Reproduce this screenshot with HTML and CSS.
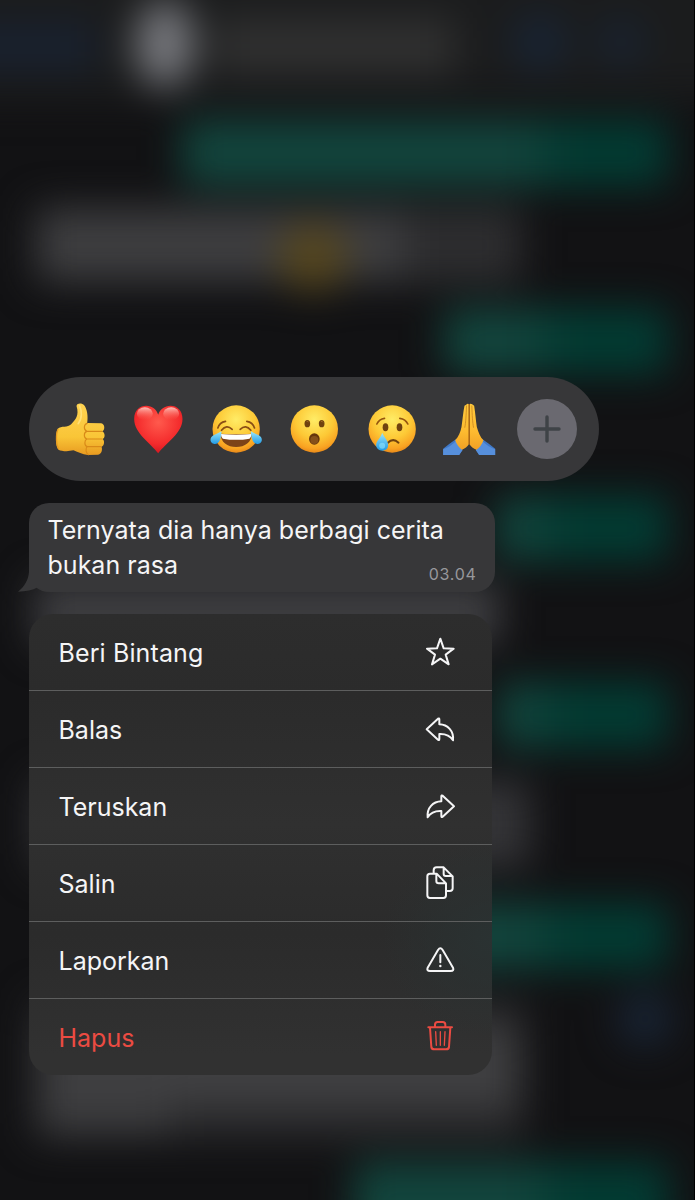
FILE: index.html
```html
<!DOCTYPE html>
<html lang="id">
<head>
<meta charset="utf-8">
<title>Pesan</title>
<link rel="stylesheet" href="styles.css">
</head>
<body>
<svg class="backdrop" viewBox="0 0 695 1200" aria-hidden="true">
  <defs>
    <filter id="soft" filterUnits="userSpaceOnUse" x="-80" y="-80" width="860" height="1360" color-interpolation-filters="sRGB"><feGaussianBlur stdDeviation="19"/></filter>
    <linearGradient id="sent" gradientUnits="userSpaceOnUse" x1="180" y1="0" x2="680" y2="0"><stop offset="0" stop-color="#12453d"/><stop offset=".68" stop-color="#12453d"/><stop offset=".78" stop-color="#023b32"/><stop offset="1" stop-color="#023b33"/></linearGradient>
  </defs>
  <rect width="695" height="1200" fill="#121214"/>
  <g filter="url(#soft)">
    <rect x="-60" y="-60" width="820" height="160" fill="#1b1c1d"/>
    <rect x="-40" y="24" width="135" height="44" fill="#182130"/>
    <rect x="215" y="18" width="240" height="56" fill="#303030"/>
    <ellipse cx="165" cy="44" rx="30" ry="44" fill="#77787d"/>
    <circle cx="540" cy="42" r="28" fill="#182434"/>
    <circle cx="621" cy="42" r="23" fill="#182332"/>
    <rect x="182" y="120" width="486" height="66" rx="8" fill="url(#sent)"/>
    <rect x="34" y="206" width="488" height="78" rx="8" fill="#2d2d2f"/>
    <rect x="40" y="212" width="365" height="66" fill="#3e3e40"/>
    <circle cx="313" cy="257" r="35" fill="#55461f"/>
    <rect x="444" y="308" width="224" height="66" rx="8" fill="url(#sent)"/>
    <rect x="496" y="495" width="172" height="66" rx="8" fill="url(#sent)"/>
    <rect x="34" y="580" width="466" height="66" rx="8" fill="#3e3e41"/>
    <rect x="498" y="682" width="170" height="66" rx="8" fill="url(#sent)"/>
    <rect x="34" y="780" width="496" height="88" rx="8" fill="#343437"/>
    <rect x="400" y="903" width="268" height="66" rx="8" fill="url(#sent)"/>
    <circle cx="645" cy="1019" r="28" fill="#182434"/>
    <rect x="34" y="1000" width="490" height="138" rx="8" fill="#2c2c2e"/>
    <rect x="40" y="1030" width="478" height="74" fill="#404042"/>
    <rect x="40" y="1080" width="130" height="54" fill="#3d3d3f"/>
    <rect x="354" y="1162" width="314" height="90" rx="8" fill="url(#sent)"/>
  </g>
  <path d="M694.5 0V1200" stroke="#000"/>
</svg>

<main class="screen">
  <section class="reactions">
    <svg class="emoji" viewBox="91.5 87 180 180">
      <defs>
        <linearGradient id="hand" x1="0" y1="0" x2="0" y2="1"><stop offset="0" stop-color="#ffd351"/><stop offset=".65" stop-color="#f9c537"/><stop offset="1" stop-color="#e89a20"/></linearGradient>
        <radialGradient id="face" cx=".5" cy=".3" r=".72"><stop offset="0" stop-color="#ffec66"/><stop offset=".55" stop-color="#fdc936"/><stop offset=".85" stop-color="#f9a322"/><stop offset="1" stop-color="#e58417"/></radialGradient>
        <linearGradient id="tear" x1="0" y1="0" x2="0" y2="1"><stop offset="0" stop-color="#9be6fb"/><stop offset="1" stop-color="#229be5"/></linearGradient>
        <radialGradient id="love" cx=".5" cy=".35" r=".65"><stop offset="0" stop-color="#ff5a4d"/><stop offset=".7" stop-color="#f42b2c"/><stop offset="1" stop-color="#d41822"/></radialGradient>
        <linearGradient id="shine" x1="0" y1="0" x2="0" y2="1"><stop offset="0" stop-color="#ffd9d0" stop-opacity=".85"/><stop offset="1" stop-color="#ff6a5a" stop-opacity="0"/></linearGradient>
        <linearGradient id="palm" x1="0" y1="0" x2="0" y2="1"><stop offset="0" stop-color="#ffc93c"/><stop offset=".6" stop-color="#fdbb30"/><stop offset="1" stop-color="#f0a024"/></linearGradient>
      </defs>
      <path d="M171 108C173 98 188 99 194 106C203 118 206 138 203 159L245 160C257 162 257 181 248 184C258 189 257 205 249 207C257 212 254 228 246 230C250 240 245 253 235 254L205 255C187 253 177 247 162 241C145 245 127 244 117 239C108 228 107 192 115 176C125 167 145 174 155 163C168 149 180 136 171 108Z" fill="url(#hand)"/>
      <path d="M203 160C193 163 191 178 202 184C192 187 192 204 202 207C194 211 194 227 203 230C197 236 199 250 207 254M202 184H247M202 207H247M203 230H244" fill="none" stroke="#d98a18" stroke-width="3.5" stroke-linecap="round"/>
      <path d="M116 177C108 192 110 227 118 237" fill="none" stroke="#e79d22" stroke-width="4"/>
      <path d="M180 107C187 122 189 145 176 161" fill="none" stroke="#ffe078" stroke-width="5" stroke-linecap="round"/>
    </svg>
    <svg class="emoji" viewBox="325.5 87 180 180">
      <path d="M416 250C394 220 344 190 344 147C344 119 362 107 380 107C398 107 411 118 416 134C421 118 436 107 453 107C473 107 489 121 489 147C489 190 438 220 416 250Z" fill="url(#love)"/>
      <ellipse cx="376" cy="131" rx="24" ry="19" fill="url(#shine)"/>
      <ellipse cx="455" cy="131" rx="24" ry="19" fill="url(#shine)"/>
    </svg>
    <svg class="emoji" viewBox="19.5 87 180 180">
      <circle cx="110" cy="177" r="71" fill="url(#face)"/>
      <path d="M63 191Q110 195 157 191C157 216 136 231 110 231C84 231 63 216 63 191Z" fill="#7d4318"/>
      <path d="M64 192Q110 196 156 192Q155 202 150 206Q110 213 70 206Q65 202 64 192Z" fill="#fff"/>
      <path d="M66 181Q81 162 98 178M122 178Q139 162 154 181M55 174Q60 157 78 154M142 154Q160 157 165 174" fill="none" stroke="#8a4e15" stroke-width="5" stroke-linecap="round"/>
      <path d="M66 184C65 207 59 223 45 222C29 219 30 203 42 196Q54 191 66 184ZM154 184C155 207 161 223 175 222C191 219 190 203 178 196Q166 191 154 184Z" fill="url(#tear)"/>
    </svg>
    <svg class="emoji" viewBox="252 87 180 180">
      <circle cx="343" cy="177" r="71" fill="url(#face)"/>
      <ellipse cx="322" cy="161" rx="8.5" ry="11" fill="#70420f"/><ellipse cx="365" cy="161" rx="8.5" ry="11" fill="#70420f"/>
      <path d="M320 154Q324 153 326 157M363 154Q367 153 369 157" stroke="#a36c26" stroke-width="3" fill="none"/>
      <ellipse cx="343" cy="207" rx="16" ry="17" fill="#66350b"/><ellipse cx="343" cy="210" rx="12" ry="12" fill="#85501a"/>
    </svg>
    <svg class="emoji" viewBox="-55.5 87 180 180">
      <circle cx="35" cy="177" r="71" fill="url(#face)"/>
      <ellipse cx="15" cy="172" rx="8.5" ry="12" fill="#70420f"/><ellipse cx="57" cy="172" rx="8.5" ry="12" fill="#70420f"/>
      <path d="M-11 162Q-4 147 12 145M58 145Q75 147 82 162" fill="none" stroke="#96560f" stroke-width="5" stroke-linecap="round"/>
      <path d="M22 218Q38 203 54 218" fill="none" stroke="#71420e" stroke-width="6" stroke-linecap="round"/>
      <path d="M5 188C12 203 23 212 23 225C23 236 15 242 6 242C-5 242 -13 235 -13 225C-13 212 1 203 5 188Z" fill="url(#tear)"/>
      <ellipse cx="5" cy="227" rx="9" ry="9" fill="#8ce1fa" opacity=".65"/>
    </svg>
    <svg class="emoji" viewBox="178.5 87 180 180">
      <path d="M191 236C204 226 216 217 229 208Q246 219 249 240L239 255H191ZM347 236C334 226 322 217 309 208Q292 219 289 240L299 255H347Z" fill="#3f78c8"/>
      <path d="M191 238Q216 228 230 212L249 240L239 255H191ZM347 238Q322 228 308 212L289 240L299 255H347Z" fill="#568fdc"/>
      <path d="M260 104Q266 98 269 105Q272 98 278 103L284 107C287 125 289 150 292 171C297 188 302 201 312 211Q304 232 291 239C282 235 274 230 269 221C264 230 256 236 247 239Q234 230 227 211C237 200 243 187 246 171C249 150 251 126 255 107Z" fill="url(#palm)"/>
      <path d="M269 104V222" fill="none" stroke="#9c5a12" stroke-width="4" stroke-linecap="round"/>
      <path d="M261 108C260 135 259 157 256 172M277 108C278 135 279 157 282 172" fill="none" stroke="#c78420" stroke-width="2.4" stroke-linecap="round"/>
    </svg>
    <button class="more" aria-label="Lainnya"><svg viewBox="0 0 60 60"><path d="M30 18V42M18 30H42" stroke="#3f4347" stroke-width="3.4" stroke-linecap="round"/></svg></button>
  </section>

  <section class="message">
    <svg class="tail" viewBox="24 220 96 71"><path d="M57 220V232C55 257 43 276 24 291C48 291 68 287 83 278Q97 290 120 291V220Z"/></svg>
    <p class="message-text">Ternyata dia hanya berbagi cerita<br>bukan rasa</p>
    <time class="message-time">03.04</time>
  </section>

  <nav class="menu">
    <div class="item"><span class="wide">Beri Bintang</span><svg viewBox="36 28 108 108"><path d="M91 42L101 71L131 72L107 90L116 119L91 102L66 119L75 90L51 72L81 71Z"/></svg></div>
    <div class="item"><span>Balas</span><svg viewBox="36 259 108 108"><path d="M50 314L84 282Q88 280 88 284V299C113 300 132 318 129 347C121 334 109 327 88 328V343Q88 348 84 345Z"/></svg></div>
    <div class="item"><span>Teruskan</span><svg viewBox="36 490 108 108"><path d="M132 545L98 513Q94 511 94 515V530C69 531 50 549 53 578C61 565 73 558 94 559V574Q94 579 98 576Z"/></svg></div>
    <div class="item"><span>Salin</span><svg viewBox="36 31 108 108"><path d="M71 56V47Q71 38 80 38H101L128 65V101Q128 109 119 109H110M101 39V58Q101 64 107 64H127M60 57H80L108 86V122Q108 130 100 130H60Q52 130 52 122V65Q52 57 60 57ZM79 58V79Q79 86 86 86H107"/></svg></div>
    <div class="item"><span>Laporkan</span><svg viewBox="36 262 108 108"><path d="M84 286Q91 276 98 286L129 339Q133 349 122 349H60Q49 349 53 339ZM91 301V323"/><circle cx="91" cy="334" r="3.6"/></svg></div>
    <div class="item danger"><span>Hapus</span><svg viewBox="36 492 108 108"><path d="M55 517H126M75 516V509Q75 501 83 501H98Q106 501 106 509V516M60 518L64 576Q65 583 73 583H108Q116 583 117 576L121 518"/><path class="fine" d="M77 530L79 571M91 530V571M105 530L103 571"/></svg></div>
  </nav>
</main>
</body>
</html>
```

FILE: styles.css
```css
* { box-sizing: border-box; }

body {
  margin: 0;
  width: 695px;
  height: 1200px;
  overflow: hidden;
  background: #121214;
  color: #f5f5f6;
  font-family: Inter, "Liberation Sans", sans-serif;
}

.backdrop {
  position: absolute;
  inset: 0;
  width: 695px;
  height: 1200px;
}

.screen {
  position: relative;
  display: flex;
  flex-direction: column;
  align-items: flex-start;
  padding: 377px 0 0 29px;
}

.reactions {
  display: grid;
  grid-template-columns: repeat(7, 77.8px);
  place-items: center;
  width: 570px;
  height: 104px;
  padding-left: 12.6px;
  border-radius: 52px;
  background: #373739;
}

.emoji {
  display: block;
  width: 60px;
  height: 60px;
}

.more {
  width: 60px;
  height: 60px;
  padding: 0;
  border: 0;
  border-radius: 50%;
  background: #6a6970;
}

.more svg { display: block; }

.message {
  position: relative;
  display: flex;
  justify-content: space-between;
  width: 466px;
  height: 89px;
  margin-top: 22px;
  padding: 10px 18.5px 0 18.5px;
  border-radius: 20px;
  background: #373739;
}

.tail {
  position: absolute;
  left: -11px;
  bottom: 0;
  width: 32px;
  height: 23.7px;
  fill: #373739;
}

.message-text {
  position: relative;
  margin: 0;
  font-size: 25px;
  line-height: 35px;
  letter-spacing: 0.02px;
  white-space: nowrap;
}

.message-time {
  align-self: flex-end;
  margin-left: -40px;
  padding-bottom: 8px;
  color: #98989c;
  font-size: 16px;
  line-height: 20px;
  letter-spacing: 0.7px;
}

.menu {
  width: 463px;
  margin-top: 22px;
  overflow: hidden;
  border-radius: 24px;
  background:
    radial-gradient(ellipse 110px 100px at 463px 325px, #2a3232, transparent),
    linear-gradient(#2d2d2d 0, #2b2b2b 80px, #303030 210px, #2b2b2b 320px, #313131 440px);
}

.item {
  display: flex;
  align-items: center;
  justify-content: space-between;
  height: 77px;
  padding: 0 34px 0 29.5px;
  border-bottom: 1px solid #5d5e5e;
  font-size: 25px;
  line-height: 36px;
}

.item:last-child {
  height: 76px;
  border-bottom: 0;
}

.item span { padding-top: 1px; }

.item .wide { letter-spacing: 0.12px; }

.item svg {
  width: 36px;
  height: 36px;
  fill: none;
  stroke: currentColor;
  stroke-width: 6;
  stroke-linejoin: round;
  stroke-linecap: round;
}

.item circle {
  fill: currentColor;
  stroke: none;
}

.item .fine { stroke-width: 4; }

.danger { color: #eb4b42; }
```
